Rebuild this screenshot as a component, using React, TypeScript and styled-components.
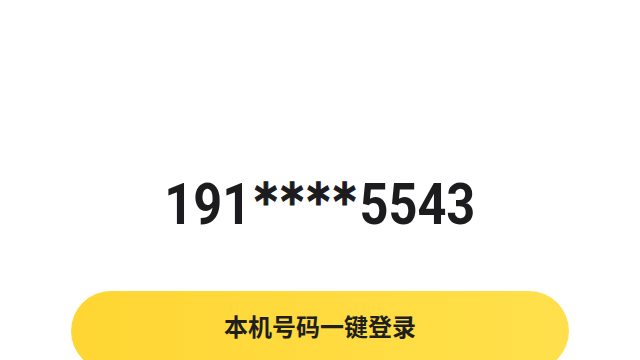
import React from 'react'
import styled, { createGlobalStyle } from 'styled-components'

const GlobalStyle = createGlobalStyle`
  html, body {
    margin: 0;
    padding: 0;
    background: #ffffff;
  }
  body {
    font-family: Roboto, "Noto Sans CJK SC", sans-serif;
  }
`

const App: React.FC = () => {
  return (
    <Page>
      <GlobalStyle />
      <PhoneNumber>
        191<Mask>****</Mask>5543
      </PhoneNumber>
      <LoginButton type="button">本机号码一键登录</LoginButton>
    </Page>
  )
}

const Page = styled.div`
  width: 640px;
  height: 360px;
  overflow: hidden;
  display: flex;
  flex-direction: column;
  align-items: center;
  padding-top: 175px;
  box-sizing: border-box;
`

const PhoneNumber = styled.div`
  height: 58px;
  font-family: Roboto, sans-serif;
  font-weight: 700;
  font-size: 58px;
  line-height: 58px;
  letter-spacing: 0;
  color: #1c1c1e;
  white-space: nowrap;
  transform: scaleX(0.87);
`

const Mask = styled.span`
  font-family: "DejaVu Sans", sans-serif;
  font-weight: 700;
  font-size: 50px;
  line-height: 0;
  letter-spacing: 4px;
  margin: 0 0 0 4px;
  vertical-align: 5px;
  -webkit-text-stroke: 1.2px #1c1c1e;
`

const LoginButton = styled.button`
  flex-shrink: 0;
  margin-top: 58px;
  width: 498px;
  height: 80px;
  border: none;
  border-radius: 40px;
  background: linear-gradient(90deg, #ffd633 0%, #ffe04c 100%);
  display: flex;
  align-items: center;
  justify-content: center;
  padding: 0 0 12px;
  font-family: "Noto Sans CJK SC", sans-serif;
  font-weight: 700;
  font-size: 24px;
  color: #1f1f1f;
  cursor: pointer;
`

export default App
